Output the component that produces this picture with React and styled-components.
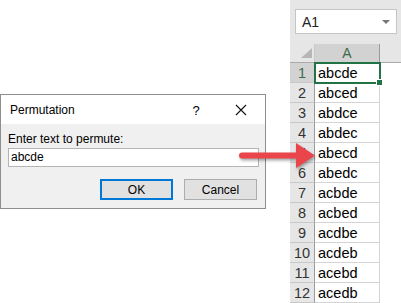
import styled, { createGlobalStyle } from "styled-components"

const GlobalStyle = createGlobalStyle`
    html, body {
        margin: 0;
        padding: 0;
        background: #ffffff;
        overflow: hidden;
    }
`

const Page = styled.div`
    position: relative;
    display: flex;
    width: 401px;
    height: 303px;
    overflow: hidden;
    font-family: "Liberation Sans", Arial, sans-serif;
`

const LeftArea = styled.div`
    width: 290px;
    padding-top: 94px;
    box-sizing: border-box;
`

const Dialog = styled.div`
    width: 266px;
    height: 115px;
    box-sizing: border-box;
    border: 1px solid #8e8e8e;
    display: flex;
    flex-direction: column;
    background: #f0f0f0;
`

const TitleBar = styled.div`
    height: 28px;
    background: #ffffff;
    display: flex;
    align-items: center;
    padding-left: 9px;
    padding-top: 1px;
    font-size: 12px;
    color: #000;
`

const TitleText = styled.span`
    flex: 1;
`

const HelpGlyph = styled.span`
    width: 12px;
    margin-right: 33px;
    font-size: 13px;
    text-align: center;
`

const CloseButton = styled.span`
    width: 12px;
    height: 12px;
    margin-right: 18px;
    display: flex;
`

const Body = styled.div`
    flex: 1;
    padding: 8px 7px 0 7px;
    display: flex;
    flex-direction: column;
`

const Label = styled.div`
    font-size: 12px;
    line-height: 15px;
    color: #000;
    margin-bottom: 1px;
`

const Input = styled.div`
    height: 19px;
    width: 251px;
    box-sizing: border-box;
    border: 1px solid #b4b4b4;
    background: #fff;
    font-size: 12px;
    line-height: 17px;
    padding-left: 2px;
    color: #000;
`

const ButtonRow = styled.div`
    display: flex;
    justify-content: flex-end;
    gap: 11px;
    margin-top: 12px;
    padding-right: 1px;
`

const Button = styled.div`
    width: 73px;
    height: 21px;
    box-sizing: border-box;
    border: ${p => (p.$primary ? "2px solid #0078d7" : "1px solid #adadad")};
    background: #e1e1e1;
    font-size: 12px;
    display: flex;
    align-items: center;
    justify-content: center;
    color: #000;
`

const Sheet = styled.div`
    width: 111px;
    background: #e6e6e6;
    display: flex;
    flex-direction: column;
`

const NameBar = styled.div`
    height: 45px;
    padding: 9px 4px 0 5px;
    box-sizing: border-box;
`

const NameBox = styled.div`
    height: 25px;
    width: 102px;
    box-sizing: border-box;
    background: #fff;
    border: 1px solid #c6c6c6;
    display: flex;
    align-items: center;
    padding: 0 6px 0 6px;
    font-size: 14px;
    color: #222;
`

const NameText = styled.span`
    flex: 1;
`

const DropArrow = styled.span`
    width: 0;
    height: 0;
    border-left: 4px solid transparent;
    border-right: 4px solid transparent;
    border-top: 4px solid #777;
`

const Grid = styled.div`
    display: grid;
    grid-template-columns: 25px 65px 1fr;
    grid-auto-rows: 20px;
    grid-template-rows: 19px;
    background: #fff;
`

const Corner = styled.div`
    position: relative;
    background: #e6e6e6;
    border-bottom: 1px solid #ababab;
    border-right: 1px solid #c8c8c8;
    box-sizing: border-box;

    &::after {
        content: "";
        position: absolute;
        right: 2px;
        bottom: 4px;
        width: 0;
        height: 0;
        border-left: 11px solid transparent;
        border-bottom: 10px solid #b6b6b6;
    }
`

const ColHeader = styled.div`
    background: ${p => (p.$selected ? "#d2d2d2" : "#e6e6e6")};
    border-bottom: 1px solid #ababab;
    border-right: ${p => (p.$selected ? "1px solid #9b9b9b" : "none")};
    box-sizing: border-box;
    font-size: 14px;
    color: #3e6a4c;
    display: flex;
    align-items: center;
    justify-content: center;
`

const RowHeader = styled.div`
    background: ${p => (p.$selected ? "#d2d2d2" : "#e6e6e6")};
    border-bottom: 1px solid #c8c8c8;
    border-right: 1px solid #9b9b9b;
    box-sizing: border-box;
    font-size: 14.5px;
    color: ${p => (p.$selected ? "#3e6a4c" : "#333")};
    display: flex;
    align-items: center;
    justify-content: center;
`

const Cell = styled.div`
    position: relative;
    z-index: ${p => (p.$selected ? 2 : "auto")};
    background: #fff;
    border-bottom: 1px solid #d4d4d4;
    border-right: 1px solid #d4d4d4;
    box-sizing: border-box;
    font-size: 14.5px;
    color: #000;
    display: flex;
    align-items: center;
    padding-left: 3px;

    ${p => p.$selected && `
        &::before {
            content: "";
            position: absolute;
            top: -1px;
            left: -1px;
            right: -2px;
            bottom: -2px;
            border: 2px solid #217346;
        }
        &::after {
            content: "";
            position: absolute;
            right: -4px;
            bottom: -4px;
            width: 5px;
            height: 5px;
            background: #217346;
            border: 1px solid #fff;
        }
    `}
`

const Blank = styled.div`
    background: #fff;
`

const HeaderBlank = styled.div`
    background: #e6e6e6;
    border-bottom: 1px solid #ababab;
`

const ArrowOverlay = styled.svg`
    position: absolute;
    left: 238px;
    top: 140px;
    z-index: 3;
    overflow: visible;
    filter: drop-shadow(1px 2px 1.5px rgba(0, 0, 0, 0.35));
`

const perms = [
    "abcde", "abced", "abdce", "abdec", "abecd", "abedc",
    "acbde", "acbed", "acdbe", "acdeb", "acebd", "acedb",
]

const App = () => {
  return (
    <Page>
        <GlobalStyle />
        <LeftArea>
            <Dialog>
                <TitleBar>
                    <TitleText>Permutation</TitleText>
                    <HelpGlyph>?</HelpGlyph>
                    <CloseButton>
                        <svg width="12" height="12" viewBox="0 0 12 12">
                            <path d="M1 1 L11 11 M11 1 L1 11" stroke="#111" strokeWidth="1.1" fill="none" />
                        </svg>
                    </CloseButton>
                </TitleBar>
                <Body>
                    <Label>Enter text to permute:</Label>
                    <Input>abcde</Input>
                    <ButtonRow>
                        <Button $primary>OK</Button>
                        <Button>Cancel</Button>
                    </ButtonRow>
                </Body>
            </Dialog>
        </LeftArea>
        <Sheet>
            <NameBar>
                <NameBox>
                    <NameText>A1</NameText>
                    <DropArrow />
                </NameBox>
            </NameBar>
            <Grid>
                <Corner />
                <ColHeader $selected>A</ColHeader>
                <HeaderBlank />
                {perms.map((p, i) => (
                    <Row key={p} n={i + 1} value={p} />
                ))}
            </Grid>
        </Sheet>
        <ArrowOverlay width="80" height="30" viewBox="0 0 80 30">
            <path d="M4 12.5 L58 12.5 L58 3 L77 15.5 L58 28 L58 18.5 L4 18.5 Q1 18.5 1 15.5 Q1 12.5 4 12.5 Z" fill="#e9454b" />
        </ArrowOverlay>
    </Page>
  )
}

const Row = ({ n, value }) => (
    <>
        <RowHeader $selected={n === 1}>{n}</RowHeader>
        <Cell $selected={n === 1}>{value}</Cell>
        <Blank />
    </>
)

export default App
